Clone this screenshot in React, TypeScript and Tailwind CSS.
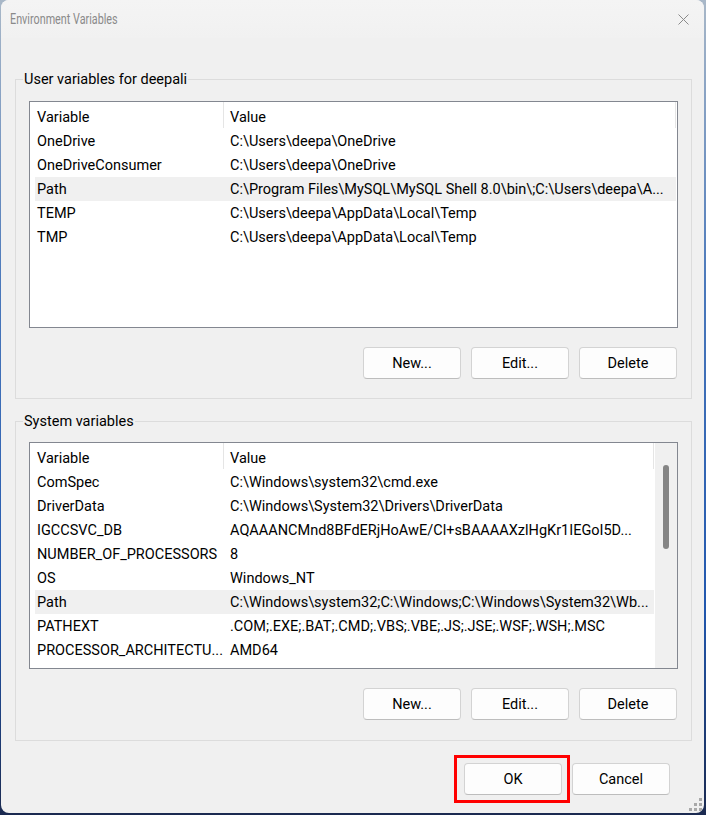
import React from "react";

type Row = { name: string; value: string; sel?: boolean };

const userRows: Row[] = [
  { name: "OneDrive", value: "C:\\Users\\deepa\\OneDrive" },
  { name: "OneDriveConsumer", value: "C:\\Users\\deepa\\OneDrive" },
  {
    name: "Path",
    value: "C:\\Program Files\\MySQL\\MySQL Shell 8.0\\bin\\;C:\\Users\\deepa\\A...",
    sel: true,
  },
  { name: "TEMP", value: "C:\\Users\\deepa\\AppData\\Local\\Temp" },
  { name: "TMP", value: "C:\\Users\\deepa\\AppData\\Local\\Temp" },
];

const sysRows: Row[] = [
  { name: "ComSpec", value: "C:\\Windows\\system32\\cmd.exe" },
  { name: "DriverData", value: "C:\\Windows\\System32\\Drivers\\DriverData" },
  { name: "IGCCSVC_DB", value: "AQAAANCMnd8BFdERjHoAwE/Cl+sBAAAAXzlHgKr1IEGoI5D..." },
  { name: "NUMBER_OF_PROCESSORS", value: "8" },
  { name: "OS", value: "Windows_NT" },
  {
    name: "Path",
    value: "C:\\Windows\\system32;C:\\Windows;C:\\Windows\\System32\\Wb...",
    sel: true,
  },
  { name: "PATHEXT", value: ".COM;.EXE;.BAT;.CMD;.VBS;.VBE;.JS;.JSE;.WSF;.WSH;.MSC" },
  { name: "PROCESSOR_ARCHITECTU...", value: "AMD64" },
];

function VarList({ rows, scroll }: { rows: Row[]; scroll?: boolean }) {
  return (
    <div className="flex h-[227px] border border-[#838790] bg-white">
      <div className="flex min-w-0 flex-1 flex-col">
        <div className="mr-[1px] flex h-[27px] items-center">
          <div className="w-[193px] shrink-0 pl-[7px] pt-[4px]">Variable</div>
          <div className="h-[26px] w-px shrink-0 self-start bg-[#e5e5e5]" />
          <div className="flex-1 pl-[6px] pt-[4px]">Value</div>
          <div className="h-[26px] w-px shrink-0 self-start bg-[#e5e5e5]" />
        </div>
        {rows.map((r) => (
          <div
            key={r.name}
            className={
              r.sel
                ? "ml-[5px] mr-[1px] flex h-[24px] items-center bg-[#f0f0f0] pt-[2px]"
                : "ml-[5px] mr-[1px] flex h-[24px] items-center pt-[2px]"
            }
          >
            <div className="w-[193px] shrink-0 overflow-hidden whitespace-nowrap pl-[2px]">
              {r.name}
            </div>
            <div className="min-w-0 flex-1 overflow-hidden whitespace-nowrap pl-[2px]">
              {r.value}
            </div>
          </div>
        ))}
      </div>
      {scroll && (
        <div className="flex w-[22px] shrink-0 flex-col items-center bg-[#f0f0f0]">
          <div className="mt-[22px] h-[84px] w-[6px] rounded-[3px] bg-[#858585]" />
        </div>
      )}
    </div>
  );
}

function Btn({ label }: { label: string }) {
  return (
    <button className="flex h-[32px] w-[98px] items-center justify-center rounded-[4px] border border-[#d3d3d3] border-b-[#bdbdbd] bg-[#fdfdfd] pt-[1px] text-black">
      {label}
    </button>
  );
}

function Group({
  title,
  rows,
  scroll,
  tight,
}: {
  title: string;
  rows: Row[];
  scroll?: boolean;
  tight?: boolean;
}) {
  return (
    <div
      className={
        tight
          ? "relative h-[320px] border border-[#dcdcdc] px-[13px] pt-[20px]"
          : "relative h-[320px] border border-[#dcdcdc] px-[13px] pt-[21px]"
      }
    >
      <span className="absolute left-[7px] top-[-10px] bg-[#f0f0f0] px-[1px] leading-[20px]">
        {title}
      </span>
      <VarList rows={rows} scroll={scroll} />
      <div className="mt-[19px] flex justify-end gap-[10px] pr-[1px]">
        <Btn label="New..." />
        <Btn label="Edit..." />
        <Btn label="Delete" />
      </div>
    </div>
  );
}

export default function App() {
  return (
    <div className="h-[815px] w-[706px] bg-[linear-gradient(to_bottom,#a9b8c8,#4a78bb_35%,#2157ae_75%,#1b2a50)] pb-[2px] pl-[1px] pr-[2px] font-['Roboto',sans-serif] text-[14.5px] text-black">
      <div className="relative h-[813px] w-[703px] overflow-hidden rounded-[8px] bg-[#f0f0f0]">
        <div className="flex h-[38px] items-center justify-between bg-[linear-gradient(to_bottom,#f4f4f4,#f1f1f1)] pl-[9px] pr-[15px]">
          <span className="inline-block origin-left scale-x-[0.72] text-[15px] text-[#8a8a8a]">
            Environment Variables
          </span>
          <svg width="11" height="11" viewBox="0 0 11 11" className="block">
            <path d="M0.5 0.5 L10.5 10.5 M10.5 0.5 L0.5 10.5" stroke="#8a8a8a" strokeWidth="1" />
          </svg>
        </div>

        <div className="ml-[14px] mt-[41px] w-[677px]">
          <Group title="User variables for deepali" rows={userRows} />
          <div className="mt-[22px]">
            <Group title="System variables" rows={sysRows} scroll tight />
          </div>
          <div className="mt-[22px] flex justify-end gap-[10px] pr-[22px]">
            <div className="relative">
              <Btn label="OK" />
              <div className="pointer-events-none absolute -bottom-[8px] -left-[10px] -right-[8px] -top-[8px] border-[3px] border-[#ff0000]" />
            </div>
            <Btn label="Cancel" />
          </div>
        </div>

        <svg
          width="14"
          height="14"
          viewBox="0 0 14 14"
          className="absolute bottom-[1px] right-[1px]"
        >
          <rect x="10" y="0" width="3" height="3" fill="#a8a8a8" />
          <rect x="5" y="5" width="3" height="3" fill="#a8a8a8" />
          <rect x="10" y="5" width="3" height="3" fill="#a8a8a8" />
          <rect x="0" y="10" width="3" height="3" fill="#a8a8a8" />
          <rect x="5" y="10" width="3" height="3" fill="#a8a8a8" />
          <rect x="10" y="10" width="3" height="3" fill="#a8a8a8" />
        </svg>
      </div>
    </div>
  );
}
